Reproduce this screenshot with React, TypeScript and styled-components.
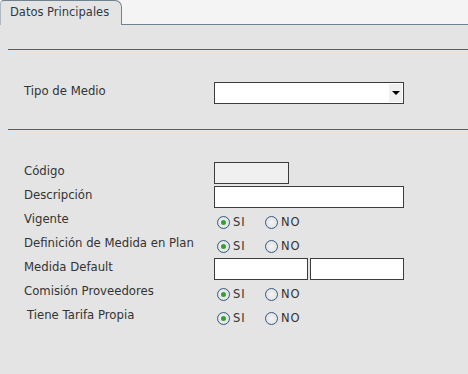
import React, { useState } from "react";
import styled, { createGlobalStyle } from "styled-components";

const GlobalStyle = createGlobalStyle`
  html, body {
    margin: 0;
    padding: 0;
    background: #e4e4e4;
  }
  * {
    box-sizing: border-box;
  }
`;

const Page = styled.div`
  width: 468px;
  height: 374px;
  background: #e4e4e4;
  font-family: "DejaVu Sans", Verdana, sans-serif;
  font-size: 11.7px;
  color: #333;
  overflow: hidden;
`;

const TabBar = styled.div`
  height: 25px;
  background: #f4f4f4;
  border-bottom: 1px solid #6f8290;
  display: flex;
  align-items: flex-end;
`;

const Tab = styled.div`
  width: 122px;
  height: 25px;
  margin-bottom: -1px;
  background: #e4e4e4;
  border: 1px solid #6f8290;
  border-left-color: #b0b8bf;
  border-bottom: none;
  border-radius: 4px 7px 0 0;
  padding: 4px 0 0 9px;
  font-size: 11.5px;
  color: #2f3a45;
`;

const Divider = styled.hr<{ $top: number }>`
  margin: ${(p) => p.$top}px 0 0 8px;
  border: none;
  height: 1px;
  background: #2c6a9b;
`;

const Section = styled.div<{ $top: number }>`
  padding: ${(p) => p.$top}px 0 0 24px;
  display: flex;
  flex-direction: column;
`;

const Row = styled.div<{ $h?: number }>`
  display: flex;
  align-items: flex-start;
  height: ${(p) => p.$h ?? 24}px;
`;

const Label = styled.div<{ $indent?: number; $top?: number }>`
  width: 190px;
  padding-left: ${(p) => p.$indent ?? 0}px;
  padding-top: ${(p) => p.$top ?? 1}px;
  line-height: 16px;
  white-space: nowrap;
`;

const Input = styled.div<{ $w: number; $disabled?: boolean }>`
  width: ${(p) => p.$w}px;
  height: 22px;
  border: 1px solid #3c3c3c;
  background: ${(p) => (p.$disabled ? "#f0f0f0" : "#fff")};
`;

const Pair = styled.div`
  display: flex;
  gap: 2px;
`;

const Select = styled.div`
  width: 190px;
  height: 22px;
  border: 1px solid #3c3c3c;
  background: #fff;
  display: flex;
  justify-content: flex-end;
  padding: 1px;
`;

const Arrow = styled.div`
  width: 13px;
  background: #efefef;
  display: flex;
  align-items: center;
  justify-content: center;

  &::after {
    content: "";
    border-left: 4px solid transparent;
    border-right: 4px solid transparent;
    border-top: 4px solid #000;
  }
`;

const RadioGroup = styled.div`
  display: flex;
  padding: 6px 0 0 3px;
`;

const Option = styled.label`
  display: flex;
  align-items: center;
  width: 48px;
  height: 13px;
  cursor: pointer;
`;

const Circle = styled.span<{ $on: boolean }>`
  width: 13px;
  height: 13px;
  border-radius: 50%;
  border: 1px solid #36597e;
  background: radial-gradient(circle, #f4f4f4 0%, #dcdcdc 100%);
  display: flex;
  align-items: center;
  justify-content: center;

  &::after {
    content: "";
    display: ${(p) => (p.$on ? "block" : "none")};
    width: 5px;
    height: 5px;
    border-radius: 50%;
    background: #2fa32f;
  }
`;

const OptionText = styled.span`
  margin-left: 3px;
  letter-spacing: 1px;
  color: #333;
  line-height: 13px;
  font-size: 11.5px;
`;

const YesNo: React.FC = () => {
  const [value, setValue] = useState("SI");
  return (
    <RadioGroup>
      {["SI", "NO"].map((opt) => (
        <Option key={opt} onClick={() => setValue(opt)}>
          <Circle $on={value === opt} />
          <OptionText>{opt}</OptionText>
        </Option>
      ))}
    </RadioGroup>
  );
};

const App: React.FC = () => {
  return (
    <Page>
      <GlobalStyle />
      <TabBar>
        <Tab>Datos Principales</Tab>
      </TabBar>
      <Divider $top={24} />
      <Section $top={32}>
        <Row $h={22}>
          <Label>Tipo de Medio</Label>
          <Select>
            <Arrow />
          </Select>
        </Row>
      </Section>
      <Divider $top={25} />
      <Section $top={32}>
        <Row>
          <Label>Código</Label>
          <Input $w={75} $disabled />
        </Row>
        <Row>
          <Label>Descripción</Label>
          <Input $w={190} />
        </Row>
        <Row>
          <Label>Vigente</Label>
          <YesNo />
        </Row>
        <Row>
          <Label>Definición de Medida en Plan</Label>
          <YesNo />
        </Row>
        <Row>
          <Label>Medida Default</Label>
          <Pair>
            <Input $w={94} />
            <Input $w={94} />
          </Pair>
        </Row>
        <Row>
          <Label>Comisión Proveedores</Label>
          <YesNo />
        </Row>
        <Row>
          <Label $indent={3}>Tiene Tarifa Propia</Label>
          <YesNo />
        </Row>
      </Section>
    </Page>
  );
};

export default App;
